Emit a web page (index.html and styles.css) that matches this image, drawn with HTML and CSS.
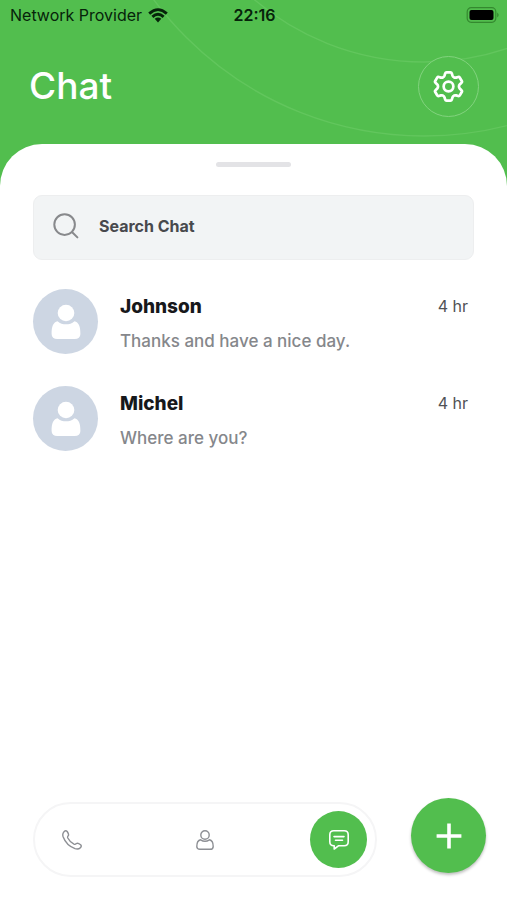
FILE: index.html
```html
<!DOCTYPE html>
<html lang="en">
<head>
<meta charset="utf-8">
<meta name="viewport" content="width=device-width, initial-scale=1">
<title>Chat</title>
<link rel="stylesheet" href="styles.css">
</head>
<body>
<svg class="rings" viewBox="0 0 507 190" aria-hidden="true">
  <circle cx="424" cy="-200" r="262"/>
  <circle cx="424" cy="-200" r="336"/>
</svg>
<header class="top">
  <div class="status">
    <div class="carrier">
      <span>Network Provider</span>
      <svg width="20" height="15" viewBox="0 0 20 15" aria-hidden="true">
        <g fill="none" stroke="#06230a" stroke-width="2.8">
          <path d="M1.2 5.6Q10 -2.4 18.8 5.6"/>
          <path d="M4.4 8.9Q10 3.7 15.6 8.9"/>
        </g>
        <path fill="#06230a" d="M6.7 10.8Q10 8 13.3 10.8L10 14.4Z"/>
      </svg>
    </div>
    <time class="clock">22:16</time>
    <svg class="battery" width="33" height="16" viewBox="0 0 33 16" aria-hidden="true">
      <rect x="1.2" y=".7" width="28.6" height="14.6" rx="4" fill="none" stroke="#34892f" stroke-width="1.2"/>
      <rect x="3.5" y="3" width="24" height="10" rx="2" fill="#000"/>
      <path d="M31.2 5.6q3 2.4 0 4.8z" fill="#34892f"/>
    </svg>
  </div>
  <div class="title-row">
    <h1>Chat</h1>
    <button class="settings" type="button" aria-label="Settings">
      <svg width="31" height="31" viewBox="0 0 32 32" fill="none" stroke="#fff" stroke-width="2.8" stroke-linejoin="round" aria-hidden="true">
        <path d="M12.6 2.4Q12.9 1.4 14 1.4H18Q19.1 1.4 19.4 2.4L20.1 4.8Q20.5 6 21.7 6.6Q22.8 7.1 23.9 6.8L26 6.2Q27.1 5.9 27.7 6.9L29.7 10.3Q30.3 11.3 29.4 12.1L27.6 13.9Q26.8 14.8 26.8 16Q26.8 17.2 27.6 18.1L29.4 19.9Q30.3 20.7 29.7 21.7L27.7 25.1Q27.1 26.1 26 25.8L23.9 25.2Q22.8 24.9 21.7 25.4Q20.5 26 20.1 27.2L19.4 29.6Q19.1 30.6 18 30.6H14Q12.9 30.6 12.6 29.6L11.9 27.2Q11.5 26 10.3 25.4Q9.2 24.9 8.1 25.2L6 25.8Q4.9 26.1 4.3 25.1L2.3 21.7Q1.7 20.7 2.6 19.9L4.4 18.1Q5.2 17.2 5.2 16Q5.2 14.8 4.4 13.9L2.6 12.1Q1.7 11.3 2.3 10.3L4.3 6.9Q4.9 5.9 6 6.2L8.1 6.8Q9.2 7.1 10.3 6.6Q11.5 6 11.9 4.8Z"/>
        <circle cx="16" cy="16" r="5"/>
      </svg>
    </button>
  </div>
</header>

<main class="sheet">
  <div class="handle"></div>
  <label class="search">
    <svg width="26" height="26" viewBox="0 0 26 26" fill="none" stroke="#88898c" stroke-width="2" stroke-linecap="round" aria-hidden="true">
      <circle cx="11.6" cy="11.6" r="10.3"/>
      <path d="M19.2 19.2L24.4 24.4"/>
    </svg>
    <input type="search" placeholder="Search Chat" aria-label="Search Chat">
  </label>

  <ul class="chats">
    <li class="chat">
      <span class="avatar">
        <svg width="30" height="36" viewBox="0 0 30 36" fill="#fff" aria-hidden="true">
          <circle cx="15" cy="9" r="8.3"/>
          <path d="M6.5 17.2C9 19.6 12 20.3 15 20.3S21 19.6 23.5 17.2C27.6 18.2 29.5 22 29.4 30Q29.3 35 23.5 35H6.5Q.7 35 .6 30C.5 22 2.4 18.2 6.5 17.2Z"/>
        </svg>
      </span>
      <div class="summary">
        <h2>Johnson</h2>
        <p>Thanks and have a nice day.</p>
      </div>
      <time>4 hr</time>
    </li>
    <li class="chat">
      <span class="avatar">
        <svg width="30" height="36" viewBox="0 0 30 36" fill="#fff" aria-hidden="true">
          <circle cx="15" cy="9" r="8.3"/>
          <path d="M6.5 17.2C9 19.6 12 20.3 15 20.3S21 19.6 23.5 17.2C27.6 18.2 29.5 22 29.4 30Q29.3 35 23.5 35H6.5Q.7 35 .6 30C.5 22 2.4 18.2 6.5 17.2Z"/>
        </svg>
      </span>
      <div class="summary">
        <h2>Michel</h2>
        <p>Where are you?</p>
      </div>
      <time>4 hr</time>
    </li>
  </ul>

  <footer class="bottom">
    <nav class="tabs">
      <a class="tab" href="#calls" aria-label="Calls">
        <svg width="20" height="20" viewBox="0 0 20 20" fill="none" stroke="#8d8f94" stroke-width="1.4" stroke-linejoin="round" aria-hidden="true">
          <path d="M2 1.7Q3.7 0 5.2 1.5C6.2 3 7 4.5 6.4 5.6Q5.2 6.7 5.8 8C7.2 10.8 9.3 12.8 12 14.2Q13.3 14.7 14.4 13.5C15.5 12.9 17 13.5 18.6 14.7Q20 16 18.4 17.7Q16.4 19.8 13 18.7C7.4 16.6 3.2 12.4 1.1 6.8Q.1 3.7 2 1.7Z"/>
        </svg>
      </a>
      <a class="tab" href="#contacts" aria-label="Contacts">
        <svg width="18" height="20" viewBox="0 0 18 20" fill="none" stroke="#8d8f94" stroke-width="1.4" stroke-linejoin="round" aria-hidden="true">
          <circle cx="9" cy="5" r="4.2"/>
          <path d="M4.6 9.8Q9 12.6 13.4 9.8C16 10.4 17.2 12.8 17.2 16.4Q17.2 19.3 14 19.3H4Q.8 19.3 .8 16.4C.8 12.8 2 10.4 4.6 9.8Z"/>
        </svg>
      </a>
      <a class="tab active" href="#chat" aria-label="Chat" aria-current="page">
        <svg width="20" height="20" viewBox="0 0 20 20" fill="none" stroke="#fff" stroke-width="1.6" stroke-linecap="round" stroke-linejoin="round" aria-hidden="true">
          <path d="M4.8.8H15.2Q19.2.8 19.2 4.8V11.8Q19.2 15.8 15.2 15.8H9.4L5.2 19V15.8H4.8Q.8 15.8 .8 11.8V4.8Q.8 .8 4.8 .8Z"/>
          <path d="M5 6.6H15M6.5 10.2H13.5"/>
        </svg>
      </a>
    </nav>
    <button class="add" type="button" aria-label="New chat">
      <svg width="26" height="26" viewBox="0 0 26 26" stroke="#fff" stroke-width="3.6" aria-hidden="true">
        <path d="M13 .6V25.4M.6 13H25.4"/>
      </svg>
    </button>
  </footer>
</main>
</body>
</html>
```

FILE: styles.css
```css
* {
  box-sizing: border-box;
}

body {
  margin: 0;
  min-height: 100vh;
  display: flex;
  flex-direction: column;
  position: relative;
  background: #52be4e;
  font-family: Inter, "Liberation Sans", sans-serif;
}

h1, h2, p, ul {
  margin: 0;
  padding: 0;
}

button {
  padding: 0;
  cursor: pointer;
}

svg {
  display: block;
  flex: none;
}

.rings {
  position: absolute;
  top: 0;
  right: 0;
  width: 100%;
  fill: none;
  stroke: #62c65d;
  stroke-width: 1.4;
}

.top {
  position: relative;
}

.status {
  display: grid;
  grid-template-columns: 1fr auto 1fr;
  align-items: center;
  height: 30px;
  padding: 0 8px 0 10px;
  font-size: 16px;
  color: #06230a;
}

.carrier {
  display: flex;
  align-items: center;
  gap: 6px;
  white-space: nowrap;
}

.clock {
  font-weight: 600;
}

.battery {
  justify-self: end;
}

.title-row {
  display: flex;
  align-items: center;
  justify-content: space-between;
  height: 114px;
  padding: 0 28px 2px 29px;
}

h1 {
  font-size: 37px;
  font-weight: 500;
  line-height: 44px;
  color: #fff;
}

.settings {
  display: grid;
  place-items: center;
  width: 61px;
  height: 61px;
  border: 1px solid #82d37e;
  border-radius: 50%;
  background: #52be4e;
}

.sheet {
  position: relative;
  flex: 1;
  display: flex;
  flex-direction: column;
  padding: 18px 33px 23px;
  border-radius: 42px 42px 0 0;
  background: #fff;
}

.handle {
  align-self: center;
  width: 75px;
  height: 5px;
  border-radius: 3px;
  background: #e3e3e6;
}

.search {
  display: flex;
  align-items: center;
  gap: 20px;
  height: 65px;
  margin-top: 28px;
  padding: 0 19px 4px;
  border: 1px solid #edeeef;
  border-radius: 9px;
  background: #f2f4f5;
}

.search input {
  flex: 1;
  min-width: 0;
  padding: 0;
  border: 0;
  outline: 0;
  background: none;
  font: 700 16px/24px Inter, "Liberation Sans", sans-serif;
  color: #48494d;
}

.search input::placeholder {
  color: #48494d;
  opacity: 1;
}

.chats {
  display: grid;
  gap: 32px;
  margin: 29px 0;
  list-style: none;
}

.chat {
  display: flex;
  gap: 22px;
  padding-right: 6px;
}

.avatar {
  display: grid;
  place-items: center;
  flex: none;
  width: 65px;
  height: 65px;
  border-radius: 50%;
  background: #cdd6e3;
}

.summary {
  flex: 1;
  min-width: 0;
  padding-top: 6px;
}

h2 {
  font-size: 19px;
  font-weight: 800;
  line-height: 24px;
  color: #17181b;
}

.summary p {
  margin-top: 10px;
  font-size: 17px;
  font-weight: 500;
  line-height: 24px;
  color: #85878b;
}

.chat time {
  padding-top: 5px;
  font-size: 16px;
  line-height: 24px;
  color: #505155;
}

.bottom {
  display: flex;
  align-items: flex-start;
  gap: 34px;
  margin: auto -12px 0 0;
}

.tabs {
  flex: 1;
  display: flex;
  align-items: center;
  justify-content: space-between;
  height: 75px;
  margin-top: 4px;
  padding: 0 8px;
  border: 2px solid #f5f5f6;
  border-radius: 38px;
}

.tab {
  display: grid;
  place-items: center;
  width: 57px;
  height: 57px;
  border-radius: 50%;
}

.tab.active {
  background: #52be4e;
}

.add {
  display: grid;
  place-items: center;
  flex: none;
  width: 75px;
  height: 75px;
  border: 0;
  border-radius: 50%;
  background: #52be4e;
  box-shadow: 0 2px 3px rgba(0, 0, 0, 0.25);
}
```
